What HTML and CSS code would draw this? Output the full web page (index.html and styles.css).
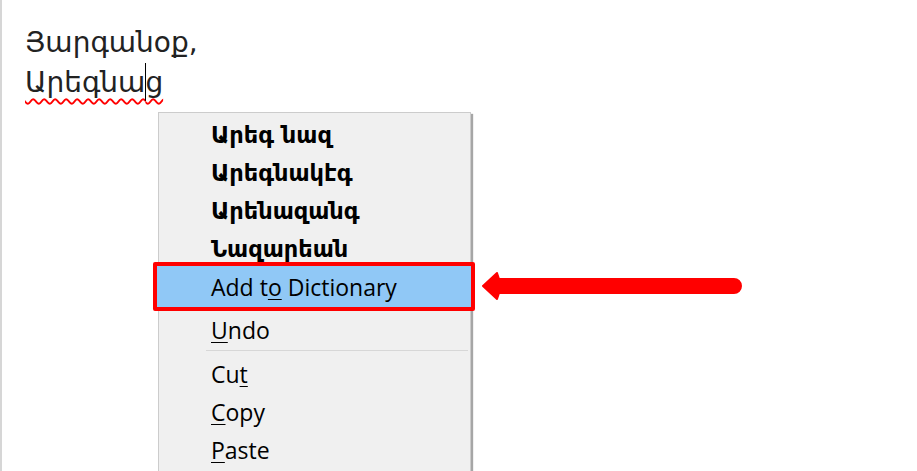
FILE: index.html
```html
<!DOCTYPE html>
<html lang="hy">
<head>
<meta charset="utf-8">
<link rel="stylesheet" href="styles.css">
</head>
<body>
<div class="doc">
  <div class="text">
    <div class="line">Յարգանօք,</div>
    <div class="line"><span class="misspelled">Արեգնա<span class="caret"></span>ց</span></div>
  </div>
</div>

<div class="menu">
  <div class="item sugg">Արեգ նազ</div>
  <div class="item sugg">Արեգնակէգ</div>
  <div class="item sugg">Արենազանգ</div>
  <div class="item sugg">Նազարեան</div>
  <div class="item hl">Add t<u>o</u> Dictionary</div>
  <div class="item undo"><u>U</u>ndo</div>
  <div class="sep"></div>
  <div class="item">Cu<u>t</u></div>
  <div class="item"><u>C</u>opy</div>
  <div class="item"><u>P</u>aste</div>
</div>

<svg class="arrow" width="270" height="40" viewBox="0 0 270 40">
  <path d="M5,18 L19,5 L21,11 L256,11 A7,7 0 0 1 256,25 L21,25 L19,31 Z" fill="#ff0000" stroke="#ff0000" stroke-width="2" stroke-linejoin="round"/>
</svg>
</body>
</html>
```

FILE: styles.css
```css
html, body {
  margin: 0;
  padding: 0;
  background: #ffffff;
  width: 917px;
  height: 471px;
  overflow: hidden;
}

.doc {
  height: 471px;
  border-left: 2px solid #d6d6d6;
  box-sizing: border-box;
}

.text {
  padding: 23px 0 0 23px;
  font-family: "DejaVu Sans", "Noto Sans", sans-serif;
  font-size: 28px;
  line-height: 40px;
  color: #222222;
}

.misspelled {
  text-decoration: underline wavy #ff0000;
  text-decoration-thickness: 2px;
  text-underline-offset: 6px;
}

.caret {
  display: inline-block;
  width: 0;
  height: 38px;
  border-left: 1px solid #000;
  margin-right: -1px;
  vertical-align: -9px;
}

.menu {
  position: absolute;
  left: 158px;
  top: 112px;
  width: 311px;
  height: 400px;
  background: #f0f0f0;
  border: 1px solid #cccccc;
  box-shadow: 2px 2px 1px rgba(0, 0, 0, 0.35);
  padding-top: 3px;
  z-index: 1;
  font-family: "Open Sans", "DejaVu Sans", sans-serif;
  font-size: 23px;
  color: #000000;
}

.item {
  height: 38px;
  line-height: 38px;
  padding-left: 52px;
  white-space: nowrap;
}

.item u {
  text-underline-offset: 3px;
  text-decoration-thickness: 1px;
}

.sugg {
  font-family: "DejaVu Sans", sans-serif;
  font-weight: bold;
  font-size: 22.5px;
}

.hl {
  position: relative;
}

.hl::before {
  content: "";
  position: absolute;
  left: -6px;
  right: -5px;
  top: -6px;
  bottom: -5px;
  border: 4px solid #ff0000;
  border-radius: 2px;
  background: #90c8f6;
  z-index: -1;
}

.undo {
  margin-top: 5px;
}

.sep {
  height: 1px;
  background: #d7d7d7;
  margin: 1px 2px 4px 47px;
}

.arrow {
  position: absolute;
  left: 478px;
  top: 268px;
}
```
